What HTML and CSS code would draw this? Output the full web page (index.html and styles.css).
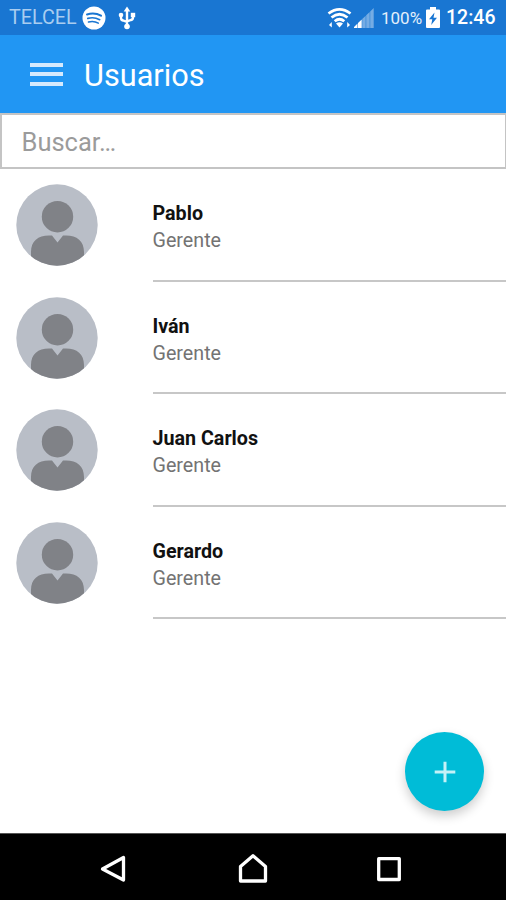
FILE: index.html
```html
<!DOCTYPE html>
<html lang="es">
<head>
<meta charset="utf-8">
<title>Usuarios</title>
<link rel="stylesheet" href="styles.css">
</head>
<body>
<svg class="defs" aria-hidden="true">
  <symbol id="avatar" viewBox="0 0 82 82">
    <clipPath id="disc"><circle cx="41" cy="41" r="40.7"/></clipPath>
    <g clip-path="url(#disc)">
      <rect width="82" height="82" fill="#b9bec7"/>
      <circle cx="41.5" cy="32.7" r="15.7" fill="#808287"/>
      <path d="M15 82V68C15 57 22 51.5 33 51.5H36L41.5 58.500L47 51.500H50C61 51.500 68 57 68 68V82Z" fill="#808287"/>
    </g>
  </symbol>
</svg>
<div class="screen">
  <div class="status">
    <span class="carrier">TELCEL</span>
    <svg class="spotify" width="24" height="24" viewBox="0 0 24 24" fill="none" stroke="#1976d2" stroke-linecap="round">
      <circle cx="12" cy="12" r="11.5" fill="#fff" stroke="none"/>
      <path d="M5 8.500C10 7 15 7.500 19 9.700" stroke-width="2"/>
      <path d="M5.800 12.400C10 11.200 14 11.700 17.700 13.700" stroke-width="1.700"/>
      <path d="M6.500 16C10 15.100 13.500 15.500 16.300 17.200" stroke-width="1.500"/>
    </svg>
    <svg class="usb" width="18" height="24" viewBox="0 0 18 24" fill="#fff">
      <path d="M9 4V20M3 9V12Q3 14 5 14.500L9 16M15 9V11.500Q15 13.500 13 14L9 15.500" fill="none" stroke="#fff" stroke-width="2.400"/>
      <path d="M9 .5L12.300 5.500H5.700Z"/><circle cx="9" cy="20.500" r="2.800"/>
      <circle cx="3" cy="9" r="2.300"/><path d="M12.800 6.800H17.200V11.200H12.800Z"/>
    </svg>
    <svg class="wifi" width="25" height="22" viewBox="0 0 25 22" fill="none" stroke="#fff" stroke-width="2.800">
      <path d="M1.500 6.500Q12.500 -1.800 23.500 6.500M4.500 10.500Q12.500 4 20.500 10.500M7.700 14.300Q12.500 10.200 17.300 14.300"/>
      <path d="M9 16.500Q12.500 14 16 16.500L12.500 20.500Z" fill="#fff" stroke="none"/>
      <path d="M2 18L4.800 15V20.500ZM23 18L20.200 15V20.500Z" fill="#fff" stroke="none"/>
    </svg>
    <svg class="signal" width="20" height="20" viewBox="0 0 20 20" fill="#fff">
      <path d="M0 20V19L3.500 15.500V20ZM4 20V15L7.700 11.500V20Z"/>
      <path opacity=".4" d="M8.200 20V11L11.700 7.700V20ZM12.200 20V7.300L15.700 4V20ZM16.200 20V3.500L19.700 0V20Z"/>
    </svg>
    <span class="percent">100%</span>
    <svg class="battery" width="14" height="21" viewBox="0 0 14 21">
      <path d="M4 0H10V2.500H13Q14 2.500 14 3.500V20Q14 21 13 21H1Q0 21 0 20V3.500Q0 2.500 1 2.500H4Z" fill="#fff"/>
      <path d="M8.500 5.500L3 12.300H6.300L5.200 18L11 10.700H7.500Z" fill="#1976d2"/>
    </svg>
    <span class="clock">12:46</span>
  </div>
  <header class="toolbar">
    <div class="menu"><i></i><i></i><i></i></div>
    <h1>Usuarios</h1>
  </header>
  <input class="search" type="text" placeholder="Buscar…">
  <ul class="users">
    <li><svg class="avatar"><use href="#avatar"/></svg><div class="info"><b>Pablo</b><span>Gerente</span></div></li>
    <li><svg class="avatar"><use href="#avatar"/></svg><div class="info"><b>Iván</b><span>Gerente</span></div></li>
    <li><svg class="avatar"><use href="#avatar"/></svg><div class="info"><b>Juan Carlos</b><span>Gerente</span></div></li>
    <li><svg class="avatar"><use href="#avatar"/></svg><div class="info"><b>Gerardo</b><span>Gerente</span></div></li>
  </ul>
  <div class="fab">
    <svg width="22" height="22" viewBox="0 0 22 22" stroke="#c5f1f7" stroke-width="3"><path d="M11 .7V21.300M.7 11H21.300"/></svg>
  </div>
  <nav class="navbar">
    <svg width="28" height="30" viewBox="0 0 28 30"><path d="M24.500 3.500V26L3.500 15Z"/></svg>
    <svg width="30" height="30" viewBox="0 0 30 30"><path d="M2.500 27V12.500L15 1.800L27.500 12.500V27Z"/></svg>
    <svg width="26" height="30" viewBox="0 0 26 30"><path d="M2.700 4.700H23.300V25.500H2.700Z"/></svg>
  </nav>
</div>
</body>
</html>
```
FILE: styles.css
```css
* { box-sizing: border-box; }
body { margin: 0; font-family: Roboto, sans-serif; background: #fff; }
.defs { position: absolute; width: 0; height: 0; }
.screen { position: relative; width: 506px; height: 900px; display: flex; flex-direction: column; overflow: hidden; }

.status { height: 35px; flex: none; background: #1976d2; display: flex; align-items: center; padding: 0 11px 0 9px; color: #fff; white-space: nowrap; }
.status svg { flex: none; }
.carrier { width: 73px; font-size: 19.7px; color: #a9cdf0; }
.usb { margin-left: 12px; }
.wifi { margin-left: auto; }
.signal { margin: 0 7px 0 2px; }
.percent { width: 41px; font-size: 17px; color: #e3effb; }
.battery { margin: 0 6px 0 4px; }
.clock { width: 49px; font-size: 19.5px; font-weight: 500; }

.toolbar { height: 78px; flex: none; background: #2196f3; display: flex; align-items: center; padding-left: 30px; }
.menu { width: 33px; height: 23px; display: flex; flex-direction: column; justify-content: space-between; }
.menu i { height: 4px; background: #d5eafd; }
.toolbar h1 { margin: 3px 0 0 21px; font-size: 30.7px; line-height: 36px; font-weight: 400; color: #fff; }

.search { width: 100%; height: 56px; flex: none; padding: 2px 0 0 19.5px; border: 2px solid #c4c4c4; border-right-width: 1px; border-radius: 0; font: 25.5px Roboto, sans-serif; outline: 0; background: #fff; }
.search::placeholder { color: #9b9b9b; opacity: 1; }

.users { list-style: none; margin: 0; padding: 0; flex: 1; }
.users li { height: 112.5px; display: flex; padding-left: 16px; }
.avatar { width: 82px; height: 82px; margin: 15px 54.5px 0 0; flex: none; }
.info { flex: 1; display: flex; flex-direction: column; padding-top: 31px; border-bottom: 2px solid #c7c7c7; font-size: 19.7px; line-height: 27px; }
.info b { font-weight: 700; color: #111; }
.info span { color: #737373; }

.fab { position: absolute; left: 405px; top: 732px; width: 79px; height: 79px; border-radius: 50%; background: #00bcd7; display: flex; align-items: center; justify-content: center; box-shadow: 0 5px 11px rgba(0,0,0,.2); }

.navbar { height: 67px; flex: none; background: #000; border-top: 1px solid #555; display: flex; align-items: center; justify-content: space-between; padding: 3px 104px 0 99px; }
.navbar svg { fill: none; stroke: #fff; stroke-width: 3.3px; stroke-linejoin: round; }
.navbar svg:nth-child(2) { margin-left: 3px; }
```
